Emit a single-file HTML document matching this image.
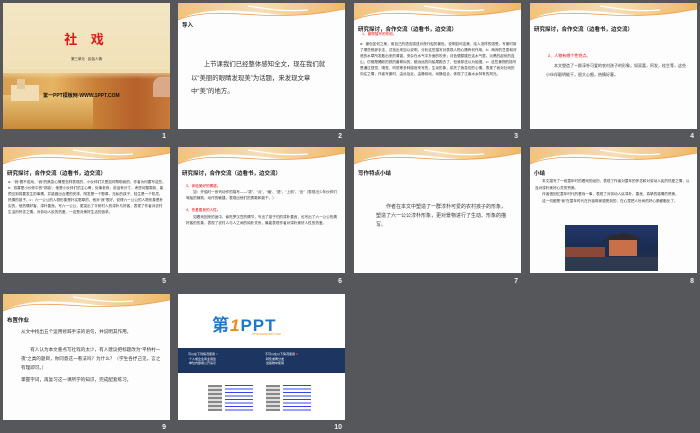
<!DOCTYPE html>
<html><head><meta charset="utf-8"><style>
*{margin:0;padding:0;box-sizing:border-box}
body{width:700px;height:433px;background:#56575a;position:relative;overflow:hidden;font-family:"Liberation Sans","Noto Sans CJK SC",sans-serif}
.s{position:absolute;width:167px;height:126px;background:#fdfdfd;overflow:hidden}
.n{position:absolute;color:#eee;font-size:7px;font-weight:bold;text-align:right;width:20px}
.h{position:absolute;left:0;top:0;width:167px;height:20px}
.t{position:absolute;left:4px;top:22px;font-size:5.5px;font-weight:bold;color:#222;white-space:nowrap}
.p{position:absolute;font-size:3.6px;line-height:6px;color:#333}
.r{color:#e00}
.b{position:absolute;font-size:6px;line-height:12px;color:#333}
</style></head><body>
<svg width="0" height="0" style="position:absolute"><defs>
<linearGradient id="g" x1="0" x2="1"><stop offset="0" stop-color="#f2c27a"/><stop offset=".5" stop-color="#f6deb6"/><stop offset="1" stop-color="#f0b866"/></linearGradient>
<symbol id="w" viewBox="0 0 167 20"><path d="M0 0H167V6C140 12 120 14 95 11C70 8 40 5 20 10C10 12 4 15 0 17Z" fill="url(#g)"/><path d="M0 17C20 8 50 10 80 12C110 14 140 11 167 6" stroke="#e9a25a" stroke-width=".8" fill="none"/><path d="M70 3C90 6 105 9 130 7" stroke="#fff" stroke-width="1.2" fill="none"/></symbol></defs></svg>

<!-- 1 -->
<div class="s" style="left:3px;top:3px;background:linear-gradient(#f3e6c4,#efdcae)">
<div style="position:absolute;left:0;top:70px;width:167px;height:56px;background:linear-gradient(90deg,#d8a050,#e7b463 30%,#c98038 55%,#b5602a 80%,#c77a3a)"></div>
<div style="position:absolute;left:0;top:92px;width:90px;height:34px;background:linear-gradient(#e9c278,#c98a3a)"></div>
<div style="position:absolute;left:8px;top:82px;width:28px;height:16px;background:#f0ddb4"></div>
<div style="position:absolute;left:14px;top:76px;width:8px;height:10px;background:#e6c99a"></div>
<div style="position:absolute;left:150px;top:74px;width:17px;height:20px;background:#d9a98a;border-radius:8px 0 0 0"></div>
<div style="position:absolute;left:0;top:66px;width:167px;height:10px;background:linear-gradient(#efdcae,rgba(239,220,174,0))"></div>
<div style="position:absolute;left:0;top:26px;width:167px;text-align:center;font-size:13px;font-weight:bold;color:#e2151a;letter-spacing:5px">社 戏</div>
<div style="position:absolute;left:0;top:54px;width:167px;text-align:center;font-size:3.5px;color:#333">第三单元 · 民俗人情</div>
<div style="position:absolute;left:40px;top:89px;font-size:5px;font-weight:bold;color:#111">第一PPT模板网-WWW.1PPT.COM</div>
</div>
<div class="n" style="left:146px;top:133px">1</div>

<!-- 2 -->
<div class="s" style="left:178px;top:3px"><svg class="h"><use href="#w"/></svg>
<div class="t" style="top:18px">导入</div>
<div class="b" style="left:13px;top:55px;width:140px;font-size:6.4px;line-height:13.5px">　　上节课我们已经整体感知全文，现在我们就以“美丽的眼睛发现美”为话题，来发现文章中“美”的地方。</div></div>
<div class="n" style="left:322px;top:133px">2</div>

<!-- 3 -->
<div class="s" style="left:354px;top:3px"><svg class="h"><use href="#w"/></svg>
<div class="t">研究探讨，合作交流（边看书，边交流）</div>
<div class="p r" style="left:8px;top:28px">1、景物描写的作用。</div>
<div class="p" style="left:6px;top:38px;width:158px">a：景色如何之美，用自己的语言描述月夜行船的景色，说明如何这美，给人怎样的感受，写景时用了哪些修辞手法，试找出来加以说明，分析这些描写对表现人物心情有何作用。b：两岸的豆麦和河底的水草所发散出来的清香，夹杂在水气中扑面的吹来；月色便朦胧在这水气里。淡黑的起伏的连山，仿佛是踊跃的铁的兽脊似的，都远远的向船尾跑去了，但我却还以为船慢。c：这些景物的描写是通过视觉、嗅觉、听觉等多种感官来写的，生动形象，烘托了我急切的心情，表现了我对社戏的向往之情，作者写景时，由远及近，由静到动，动静结合，体现了江南水乡特有的风光。</div></div>
<div class="n" style="left:498px;top:133px">3</div>

<!-- 4 -->
<div class="s" style="left:530px;top:3px"><svg class="h"><use href="#w"/></svg>
<div class="t">研究探讨，合作交流（边看书，边交流）</div>
<div class="p r" style="left:18px;top:50px;font-size:4px">2、人物有哪个性特点。</div>
<div class="p" style="left:16px;top:58px;width:140px;font-size:4px;line-height:9px">　　本文塑造了一群淳朴可爱的农村孩子的形象，如双喜，阿发，桂生等，这些小伙伴聪明能干，胆大心细，热情好客。</div></div>
<div class="n" style="left:674px;top:133px">4</div>

<!-- 5 -->
<div class="s" style="left:3px;top:147px"><svg class="h"><use href="#w"/></svg>
<div class="t">研究探讨，合作交流（边看书，边交流）</div>
<div class="p" style="left:5px;top:32px;width:158px">a：“我”看不成戏，“我”的焦急心情是怎样表现的，小伙伴们又是如何帮助我的，作者为何要写这些。b：双喜是小伙伴中的“领袖”，他是小伙伴们的主心骨，处事老练，说话有分寸，考虑问题周到，能预见到将要发生的事情，并能做出合理的安排，阿发是一个憨厚、无私的孩子，桂生是一个机灵、热情的孩子。c：六一公公的人物形象是朴实憨厚的，他对“我”很好，说得六一公公的人物形象是朴实的，他热情好客，淳朴善良。写六一公公，更突出了平桥村人的淳朴与好客，表现了作者对农村生活的怀念之情，对劳动人民的热爱。一这是对美好生活的追求。</div></div>
<div class="n" style="left:146px;top:278px">5</div>

<!-- 6 -->
<div class="s" style="left:178px;top:147px"><svg class="h"><use href="#w"/></svg>
<div class="t">研究探讨，合作交流（边看书，边交流）</div>
<div class="p r" style="left:8px;top:36px">3、体验美好的情感。</div>
<div class="p" style="left:8px;top:42px;width:154px">　　如：开船时一系列动作的描写——“拔”、“点”、“磕”、“退”、“上前”、“出”（表现出少年伙伴们驾船的娴熟，动作的敏捷，表现出他们的勇敢和能干。）</div>
<div class="p r" style="left:8px;top:60px">4、热爱善良的人性。</div>
<div class="p" style="left:8px;top:67px;width:154px">　　如看戏回来的途中，偷吃罗汉豆的情节，写出了孩子们的淳朴善良，也写出了六一公公热情好客的形象，表现了农村人与人之间的纯朴关系，最能表现作者对淳朴美好人性的热爱。</div></div>
<div class="n" style="left:322px;top:278px">6</div>

<!-- 7 -->
<div class="s" style="left:354px;top:147px"><svg class="h"><use href="#w"/></svg>
<div class="t">写作特点小结</div>
<div class="b" style="left:22px;top:56px;width:132px;font-size:5px;line-height:9px">　　作者在本文中塑造了一群淳朴可爱的农村孩子的形象，塑造了六一公公淳朴形象，更对景物进行了生动、形象的描写。</div></div>
<div class="n" style="left:498px;top:278px">7</div>

<!-- 8 -->
<div class="s" style="left:530px;top:147px"><svg class="h"><use href="#w"/></svg>
<div class="t">小结</div>
<div class="p" style="left:5px;top:31px;width:158px;line-height:6.5px">　　本文描写了一段童年时的看戏的经历，表现了作者对童年的怀念和对劳动人民的热爱之情，以及对淳朴美好心灵的赞美。<br>　　作者借回忆童年时代的看戏一事，表现了对劳动人民淳朴、善良、真挚的感情的赞美。<br>　　这一切都是“我”在童年时代在外祖母家感受到的，在心里把人世间的好心肠都融化了。</div>
<div style="position:absolute;left:35px;top:78px;width:93px;height:46px;background:linear-gradient(#23386a,#1a2c52 50%,#2b3448);overflow:hidden">
<div style="position:absolute;left:38px;top:8px;width:40px;height:8px;background:#2a2a30;clip-path:polygon(0 100%,20% 30%,50% 0,80% 30%,100% 100%)"></div>
<div style="position:absolute;left:44px;top:15px;width:28px;height:16px;background:#c8704a"></div>
<div style="position:absolute;left:0;top:22px;width:40px;height:12px;background:#8a4838"></div>
<div style="position:absolute;left:0;top:32px;width:93px;height:14px;background:#2e3a4e"></div>
</div></div>
<div class="n" style="left:674px;top:278px">8</div>

<!-- 9 -->
<div class="s" style="left:3px;top:294px"><svg class="h"><use href="#w"/></svg>
<div class="t">布置作业</div>
<div class="b" style="left:18px;top:34px;width:140px;font-size:4.6px;line-height:8.5px">从文中找出五个运用修辞手法的语句，并说明其作用。</div>
<div class="b" style="left:18px;top:51px;width:140px;font-size:4.6px;line-height:9px">　　有人认为本文重点写社戏的太少，有人建议把标题改为“平桥村一夜”之类的题目，你同意这一看法吗？为什么？（学生各抒己见，言之有理即可。）</div>
<div class="b" style="left:18px;top:82px;width:145px;font-size:4.6px;line-height:8.5px">掌握字词，再复习这一课所学的知识，完成配套练习。</div></div>
<div class="n" style="left:146px;top:424px">9</div>

<!-- 10 -->
<div class="s" style="left:178px;top:294px;background:#fff">
<div style="position:absolute;left:34px;top:17px;font-size:17px;font-weight:bold;color:#1e78c8;letter-spacing:1px">第<span style="color:#f08a14;font-style:italic">1</span>PPT</div>
<div style="position:absolute;left:74px;top:39px;font-size:2.5px;color:#f08a14">HTTP://WWW.1PPT.COM</div>
<div style="position:absolute;left:0;top:54px;width:167px;height:25px;background:#1c3561"></div>
<div style="position:absolute;left:10px;top:58px;font-size:3px;color:#fff;line-height:4.5px">可以在下列情况使用 <span style="color:#4c4">✔</span><br>·个人或企业商业用途<br>·单位内部或公开演示</div>
<div style="position:absolute;left:87px;top:58px;font-size:3px;color:#fff;line-height:4.5px">不可以在以下情况使用 <span style="color:#e33">✖</span><br>·转售或再分发<br>·出版物中使用</div>
<div style="position:absolute;left:30px;top:91px;width:14px;height:26px;background:repeating-linear-gradient(#888 0 2px,#ddd 2px 4px)"></div>
<div style="position:absolute;left:47px;top:91px;width:28px;height:26px;background:repeating-linear-gradient(#3344ee 0 1px,#fff 1px 3.5px)"></div>
<div style="position:absolute;left:88px;top:91px;width:14px;height:26px;background:repeating-linear-gradient(#888 0 2px,#ddd 2px 4px)"></div>
<div style="position:absolute;left:105px;top:91px;width:28px;height:26px;background:repeating-linear-gradient(#3344ee 0 1px,#fff 1px 3.5px)"></div>
</div>
<div class="n" style="left:322px;top:424px">10</div>
</body></html>
